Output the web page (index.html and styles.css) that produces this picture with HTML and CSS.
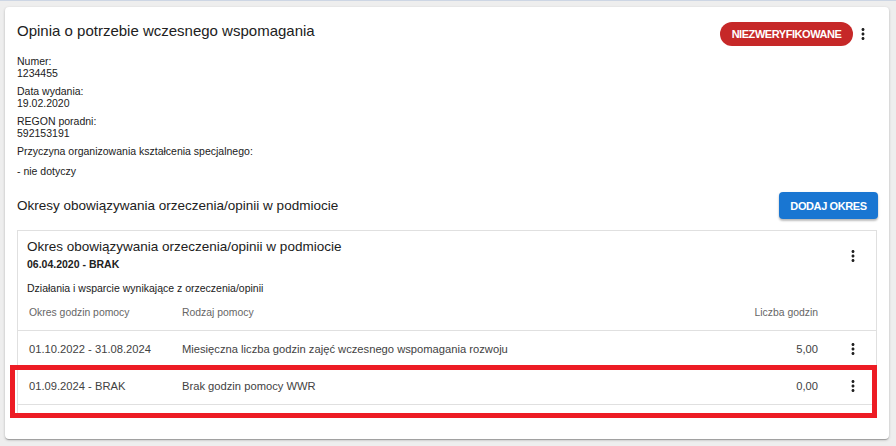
FILE: index.html
```html
<!DOCTYPE html>
<html lang="pl">
<head>
<meta charset="utf-8">
<title>Opinia o potrzebie wczesnego wspomagania</title>
<link rel="stylesheet" href="styles.css">
</head>
<body>
<div class="topline"></div>
<main class="card">
  <div class="card-head">
    <h1 class="title">Opinia o potrzebie wczesnego wspomagania</h1>
    <div class="actions">
      <span class="badge">NIEZWERYFIKOWANE</span>
      <button class="icon-btn" aria-label="Więcej">
        <svg viewBox="0 0 24 24" width="18" height="18"><path d="M12 8c1.1 0 2-.9 2-2s-.9-2-2-2-2 .9-2 2 .9 2 2 2zm0 2c-1.1 0-2 .9-2 2s.9 2 2 2 2-.9 2-2-.9-2-2-2zm0 6c-1.1 0-2 .9-2 2s.9 2 2 2 2-.9 2-2-.9-2-2-2z"/></svg>
      </button>
    </div>
  </div>

  <div class="fields">
    <div class="field"><div>Numer:</div><div>1234455</div></div>
    <div class="field"><div>Data wydania:</div><div>19.02.2020</div></div>
    <div class="field"><div>REGON poradni:</div><div>592153191</div></div>
    <div class="field"><div>Przyczyna organizowania kształcenia specjalnego:</div></div>
    <div class="field reason">- nie dotyczy</div>
  </div>

  <div class="section-head">
    <h2 class="section-title">Okresy obowiązywania orzeczenia/opinii w podmiocie</h2>
    <button class="btn-primary">DODAJ OKRES</button>
  </div>

  <section class="period">
    <div class="period-head">
      <div>
        <h3 class="period-title">Okres obowiązywania orzeczenia/opinii w podmiocie</h3>
        <div class="period-range">06.04.2020 - BRAK</div>
      </div>
      <button class="icon-btn inner" aria-label="Więcej">
        <svg viewBox="0 0 24 24" width="18" height="18"><path d="M12 8c1.1 0 2-.9 2-2s-.9-2-2-2-2 .9-2 2 .9 2 2 2zm0 2c-1.1 0-2 .9-2 2s.9 2 2 2 2-.9 2-2-.9-2-2-2zm0 6c-1.1 0-2 .9-2 2s.9 2 2 2 2-.9 2-2-.9-2-2-2z"/></svg>
      </button>
    </div>
    <div class="period-sub">Działania i wsparcie wynikające z orzeczenia/opinii</div>
    <table class="hours">
      <thead>
        <tr><th class="c1">Okres godzin pomocy</th><th class="c2">Rodzaj pomocy</th><th class="c3">Liczba godzin</th><th class="c4"></th></tr>
      </thead>
      <tbody>
        <tr>
          <td class="c1">01.10.2022 - 31.08.2024</td>
          <td class="c2">Miesięczna liczba godzin zajęć wczesnego wspomagania rozwoju</td>
          <td class="c3">5,00</td>
          <td class="c4"><button class="icon-btn row" aria-label="Więcej"><svg viewBox="0 0 24 24" width="18" height="18"><path d="M12 8c1.1 0 2-.9 2-2s-.9-2-2-2-2 .9-2 2 .9 2 2 2zm0 2c-1.1 0-2 .9-2 2s.9 2 2 2 2-.9 2-2-.9-2-2-2zm0 6c-1.1 0-2 .9-2 2s.9 2 2 2 2-.9 2-2-.9-2-2-2z"/></svg></button></td>
        </tr>
        <tr>
          <td class="c1">01.09.2024 - BRAK</td>
          <td class="c2">Brak godzin pomocy WWR</td>
          <td class="c3">0,00</td>
          <td class="c4"><button class="icon-btn row" aria-label="Więcej"><svg viewBox="0 0 24 24" width="18" height="18"><path d="M12 8c1.1 0 2-.9 2-2s-.9-2-2-2-2 .9-2 2 .9 2 2 2zm0 2c-1.1 0-2 .9-2 2s.9 2 2 2 2-.9 2-2-.9-2-2-2zm0 6c-1.1 0-2 .9-2 2s.9 2 2 2 2-.9 2-2-.9-2-2-2z"/></svg></button></td>
        </tr>
      </tbody>
    </table>
  </section>
</main>
<div class="highlight"></div>
</body>
</html>
```
FILE: styles.css
```css
* { box-sizing: border-box; }
html, body { margin: 0; padding: 0; }
body {
  background: #eeeeee;
  font-family: "Liberation Sans", Arial, sans-serif;
  color: #212121;
  width: 896px;
  height: 446px;
  overflow: hidden;
  position: relative;
}
.topline { height: 1px; background: #cdd6e4; }
.card {
  margin: 6px 7px 0 5px;
  background: #fff;
  border-radius: 4px;
  box-shadow: 0 1px 3px rgba(0,0,0,.2), 0 1px 1px rgba(0,0,0,.14), 0 2px 1px -1px rgba(0,0,0,.12);
  padding: 14px 12px 21px 12px;
}
.card-head { display: flex; justify-content: space-between; align-items: flex-start; height: 25px; }
.title { margin: 0; font-size: 15px; line-height: 20px; font-weight: 400; }
.actions { display: flex; align-items: center; margin-top: 1px; margin-right: 5px; }
.badge {
  display: inline-flex; align-items: center; justify-content: center;
  width: 133px; height: 24px; border-radius: 12px;
  background: #c62828; color: #fff;
  font-size: 11px; font-weight: 700; letter-spacing: -0.45px;
}
.icon-btn {
  border: 0; background: none; padding: 0; margin: 0 0 0 1px;
  width: 18px; height: 18px; display: inline-flex; align-items: center; justify-content: center;
  cursor: pointer;
}
.icon-btn svg { fill: #212121; display: block; }
.fields { margin-top: 9px; font-size: 10.5px; line-height: 12px; }
.field + .field { margin-top: 6px; }
.field.reason { margin-top: 8px; }
.section-head { display: flex; justify-content: space-between; align-items: center; margin-top: 15px; margin-right: -1px; }
.section-title { margin: 0; font-size: 13.5px; line-height: 20px; font-weight: 400; }
.btn-primary {
  border: 0; background: #1976d2; color: #fff;
  width: 99px; height: 27px; border-radius: 4px;
  font-family: inherit; font-size: 11px; font-weight: 700; letter-spacing: -0.4px;
  box-shadow: 0 2px 2px rgba(0,0,0,.2), 0 1px 3px rgba(0,0,0,.12);
}
.period {
  margin-top: 11px;
  border: 1px solid #e0e0e0;
  padding: 6px 0 12px 0;
}
.period-head { display: flex; justify-content: space-between; align-items: flex-start; padding: 0 14px 0 9px; }
.period-title { margin: 0; font-size: 13.5px; line-height: 20px; font-weight: 400; }
.period-range { font-size: 10.5px; line-height: 14px; font-weight: 700; }
.icon-btn.inner { margin-top: 10px; }
.period-sub { padding: 10px 9px 0 9px; font-size: 10.5px; line-height: 14px; }
.hours { width: 100%; border-collapse: collapse; font-size: 11.2px; }
.hours th {
  height: 35px; font-weight: 400; font-size: 10.4px; color: #666; text-align: left;
  border-bottom: 1px solid #e0e0e0; padding: 0;
}
.hours td { height: 37px; color: #424242; border-bottom: 1px solid #e0e0e0; padding: 0; }
.hours .c1 { width: 152px; padding-left: 11px; }
.hours .c2 { padding-left: 12px; }
.hours .c3 { width: 140px; text-align: right; padding-right: 12px; }
.hours .c4 { width: 46px; text-align: center; }
.hours .c4 .icon-btn { margin: 0 auto; display: flex; }
.hours .c4 svg { fill: #212121; }
.highlight {
  position: absolute; left: 10px; top: 365px; width: 867px; height: 53px;
  border: 5px solid #ed1c24;
  pointer-events: none;
}
```
